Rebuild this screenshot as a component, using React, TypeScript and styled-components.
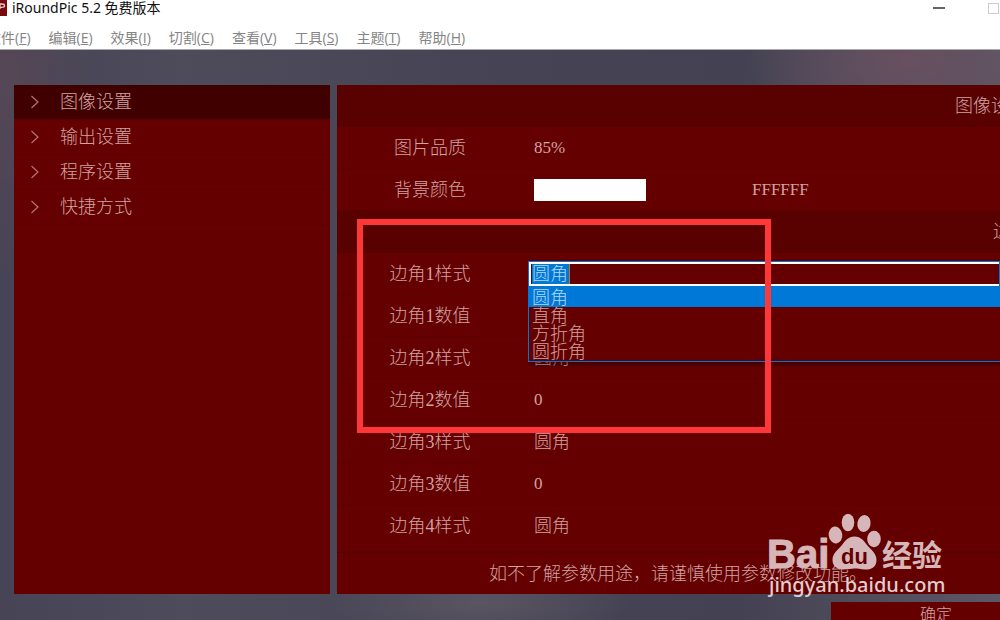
import React from "react";
import styled, { createGlobalStyle } from "styled-components";

const color = {
  panel: "#650000",
  heading: "#590000",
  active: "#400000",
  line: "#5c0000",
  text: "#d0a2a2",
  accent: "#0078d7",
};

const GlobalStyle = createGlobalStyle`
  * { box-sizing: border-box; }
  body { margin: 0; overflow: hidden; font-family: "Liberation Serif", "Noto Sans CJK SC", serif; }
  button, input, select { font: inherit; color: inherit; border: 0; background: none; padding: 0; margin: 0; border-radius: 0; outline: none; }
`;

const Window = styled.div`
  position: relative;
  display: flex;
  flex-direction: column;
  height: 100vh;
  overflow: hidden;
  color: ${color.text};
  font-size: 18px;
  font-weight: 300;
  line-height: 18px;
`;

const TopBar = styled.header`
  flex: none;
  height: 50px;
  background: #fff;
  border-bottom: 1px solid #a9a8af;
  font-family: "Noto Sans", "Noto Sans CJK SC", sans-serif;
  font-weight: 400;
  font-size: 14px;
  line-height: 16px;
  overflow: hidden;
`;

const TitleBar = styled.div`
  display: flex;
  align-items: center;
  height: 16px;
  color: #111;
`;

const AppIcon = styled.svg`
  width: 7px;
  height: 16px;
  margin-right: 5px;
`;

const Title = styled.h1`
  flex: 1;
  margin: 0;
  font: inherit;
`;

const WindowButton = styled.button`
  display: block;
  height: 16px;
  margin-left: 42px;
`;

const MenuBar = styled.nav`
  display: flex;
  gap: 18px;
  margin: 14px 0 0 -13px;
  font-family: "Open Sans", "Noto Sans CJK SC", sans-serif;
  color: #858585;
`;

const MenuButton = styled.button`
  white-space: nowrap;
`;

const Workspace = styled.main`
  flex: 1;
  display: flex;
  flex-direction: column;
  min-height: 0;
  padding: 35px 0 0 14px;
  background:
    radial-gradient(ellipse 160px 90px at 91% 2%, #68505f 0, transparent 100%),
    radial-gradient(ellipse 90px 240px at 0 0, #574756 0, transparent 100%),
    radial-gradient(ellipse 150px 40px at 48% 97%, #5a5562 0, transparent 100%),
    linear-gradient(90deg, #464455, #4e4c5b 18%, #464454 50%, #444252 74%, #5b5766);
`;

const Panels = styled.div`
  flex: 1;
  display: flex;
  gap: 7px;
  min-height: 0;
`;

const Sidebar = styled.aside`
  flex: none;
  width: 316px;
  background: ${color.panel};
`;

const SideItem = styled.button<{ $active?: boolean }>`
  display: flex;
  align-items: center;
  gap: 20px;
  width: 100%;
  height: 35px;
  padding-left: 16px;
  background: ${(p) => (p.$active ? color.active : "none")};
  border-bottom: 1px solid ${color.line};
`;

const Settings = styled.form`
  flex: 1;
  min-width: 0;
  display: flex;
  flex-direction: column;
  background: ${color.panel};
`;

const SectionHeading = styled.h2<{ $indent: number }>`
  margin: 0;
  flex: none;
  height: 42px;
  padding-left: ${(p) => p.$indent}px;
  background: ${color.heading};
  font: inherit;
  line-height: 42px;
  white-space: nowrap;
  overflow: hidden;
`;

const Row = styled.div`
  flex: none;
  display: flex;
  align-items: center;
  height: 42px;
  border-bottom: 1px solid ${color.line};
`;

const Label = styled.label`
  flex: none;
  width: 186px;
  margin-right: 11px;
  text-align: center;
`;

const TextField = styled.input`
  width: 112px;
  height: 22px;
  font-size: 17px;
  font-weight: 400;
`;

const Swatch = styled.button`
  width: 112px;
  height: 22px;
  margin-right: 106px;
  background: #fff;
`;

const ValueSelect = styled.select`
  appearance: none;
  width: 112px;
  height: 22px;
`;

const ComboWrap = styled.div`
  position: relative;
  flex: 1;
  margin-left: -6px;
`;

const ComboSelect = styled.select`
  appearance: none;
  display: block;
  width: 100%;
  height: 26px;
  padding-left: 1px;
  border: 3px solid #fff;
  border-right: 0;
  outline: 1px solid ${color.accent};
  outline-offset: -1px;
  color: #b3d7f2;
  background: linear-gradient(90deg, ${color.accent} 37px, #c8702c 37px) 1px 0 / 38px 20px no-repeat;
`;

const OptionList = styled.ul`
  position: absolute;
  z-index: 1;
  top: 26px;
  left: 0;
  right: 0;
  margin: 0;
  padding: 0;
  list-style: none;
  border: 1px solid ${color.accent};
  border-top-width: 2px;
  border-right: 0;
  background: ${color.panel};
  box-shadow: 2px 3px 4px rgba(0, 0, 0, 0.4);
`;

const Option = styled.li<{ $selected?: boolean }>`
  padding-left: 3px;
  background: ${(p) => (p.$selected ? color.accent : "none")};
  color: ${(p) => (p.$selected ? "#b3d7f2" : "inherit")};
`;

const Notice = styled.p`
  flex: 1;
  margin: 5px 0 0;
  padding-left: 152px;
  border-top: 1px solid #520000;
  line-height: 42px;
  white-space: nowrap;
`;

const Actions = styled.footer`
  flex: none;
  display: flex;
  justify-content: flex-end;
  height: 26px;
  padding-top: 8px;
  overflow: hidden;
`;

const ConfirmButton = styled.button`
  width: 169px;
  height: 26px;
  padding-left: 41px;
  background: ${color.panel};
  font-size: 16px;
`;

const Highlight = styled.div`
  position: absolute;
  z-index: 2;
  top: 219px;
  left: 357px;
  width: 414px;
  height: 214px;
  border: 6px solid #fe3838;
  pointer-events: none;
`;

const Watermark = styled.svg`
  position: absolute;
  z-index: 2;
  right: 50px;
  bottom: 20px;
  width: 185px;
  height: 90px;
  pointer-events: none;
`;

const menus = [
  ["文件", "F"],
  ["编辑", "E"],
  ["效果", "I"],
  ["切割", "C"],
  ["查看", "V"],
  ["工具", "S"],
  ["主题", "T"],
  ["帮助", "H"],
];

const sections = ["图像设置", "输出设置", "程序设置", "快捷方式"];
const cornerStyles = ["圆角", "直角", "方折角", "圆折角"];

const cornerRows = [
  { label: "边角1数值", kind: "value" },
  { label: "边角2样式", kind: "style" },
  { label: "边角2数值", kind: "value" },
  { label: "边角3样式", kind: "style" },
  { label: "边角3数值", kind: "value" },
  { label: "边角4样式", kind: "style" },
];

function Chevron() {
  return (
    <svg width="10" height="14" viewBox="0 0 10 14" fill="none" stroke="#b07474" strokeWidth="1.2" aria-hidden="true">
      <path d="M1.5 1L8 7L1.5 13" />
    </svg>
  );
}

function StyleOptions() {
  return cornerStyles.map((name) => <option key={name}>{name}</option>);
}

function BaiduMark() {
  return (
    <Watermark viewBox="0 0 185 90" fill="#d6b6b8" aria-label="Baidu 经验">
      <text x="2" y="58" fontFamily="Liberation Sans, sans-serif" fontWeight="700" fontSize="40" stroke="#d6b6b8">Bai</text>
      <ellipse cx="70.5" cy="25" rx="6.8" ry="8.5" transform="rotate(-8 70.5 25)" />
      <ellipse cx="83" cy="12.5" rx="6.3" ry="8.8" />
      <ellipse cx="99" cy="13.5" rx="6.6" ry="8.5" transform="rotate(10 99 13.5)" />
      <ellipse cx="109" cy="29" rx="6.8" ry="8.2" />
      <path d="M89.5 26.5C96 26.5 99 31 102 35C106 40 111.5 43 111.5 50C111.5 57 106 60 100 59.5C95 59 93 58.5 89.5 58.5C86 58.5 83 59.5 78 59.5C72 59.5 67.5 56 67.5 50C67.5 43 73 40 77 35C80 31 83 26.5 89.5 26.5Z" />
      <text x="76" y="54" fontFamily="Liberation Sans, sans-serif" fontWeight="700" fontSize="22" fill="#650000">du</text>
      <text x="117" y="56" fontFamily="Noto Sans CJK SC, sans-serif" fontWeight="700" fontSize="30">经验</text>
      <text x="4" y="82" fontFamily="Noto Sans, sans-serif" fontWeight="500" fontSize="20" fill="#e2cdd0">jingyan.baidu.com</text>
    </Watermark>
  );
}

export default function App() {
  return (
    <>
      <GlobalStyle />
      <Window>
        <TopBar>
          <TitleBar>
            <AppIcon viewBox="0 0 7 16" aria-hidden="true">
              <rect width="7" height="16" fill="#7b0a0d" />
              <path d="M0 3.5V9M0 4H2Q4.5 4 4.5 5.7Q4.5 7.3 2 7.3H0" fill="none" stroke="#e6c9c9" strokeWidth="1.3" />
            </AppIcon>
            <Title>iRoundPic 5.2 免费版本</Title>
            <WindowButton type="button" aria-label="Minimize">
              <svg width="12" height="16" aria-hidden="true">
                <path d="M0 8H12" stroke="#666" strokeWidth="2" />
              </svg>
            </WindowButton>
            <WindowButton type="button" aria-label="Maximize">
              <svg width="13" height="16" aria-hidden="true">
                <rect x="1.5" y="3.5" width="10" height="10" fill="none" stroke="#ccc" />
              </svg>
            </WindowButton>
          </TitleBar>
          <MenuBar>
            {menus.map(([name, key]) => (
              <MenuButton type="button" key={key}>
                {name}(<u>{key}</u>)
              </MenuButton>
            ))}
          </MenuBar>
        </TopBar>

        <Workspace>
          <Panels>
            <Sidebar>
              {sections.map((name, i) => (
                <SideItem type="button" key={name} $active={i === 0}>
                  <Chevron />
                  {name}
                </SideItem>
              ))}
            </Sidebar>

            <Settings>
              <SectionHeading $indent={618}>图像设置</SectionHeading>
              <Row>
                <Label htmlFor="quality">图片品质</Label>
                <TextField id="quality" defaultValue="85%" />
              </Row>
              <Row>
                <Label htmlFor="background">背景颜色</Label>
                <Swatch type="button" id="background" aria-label="背景颜色" />
                <TextField aria-label="背景颜色" defaultValue="FFFFFF" />
              </Row>
              <SectionHeading $indent={656}>边角设置</SectionHeading>
              <Row>
                <Label htmlFor="corner-first">边角1样式</Label>
                <ComboWrap>
                  <ComboSelect id="corner-first">
                    <StyleOptions />
                  </ComboSelect>
                  <OptionList role="listbox">
                    {cornerStyles.map((name, i) => (
                      <Option role="option" aria-selected={i === 0} key={name} $selected={i === 0}>
                        {name}
                      </Option>
                    ))}
                  </OptionList>
                </ComboWrap>
              </Row>
              {cornerRows.map(({ label, kind }) => (
                <Row key={label}>
                  <Label htmlFor={label}>{label}</Label>
                  {kind === "value" ? (
                    <TextField id={label} defaultValue="0" />
                  ) : (
                    <ValueSelect id={label}>
                      <StyleOptions />
                    </ValueSelect>
                  )}
                </Row>
              ))}
              <Notice>如不了解参数用途，请谨慎使用参数修改功能。</Notice>
            </Settings>
          </Panels>
          <Actions>
            <ConfirmButton type="button">确定</ConfirmButton>
          </Actions>
        </Workspace>

        <Highlight />
        <BaiduMark />
      </Window>
    </>
  );
}
